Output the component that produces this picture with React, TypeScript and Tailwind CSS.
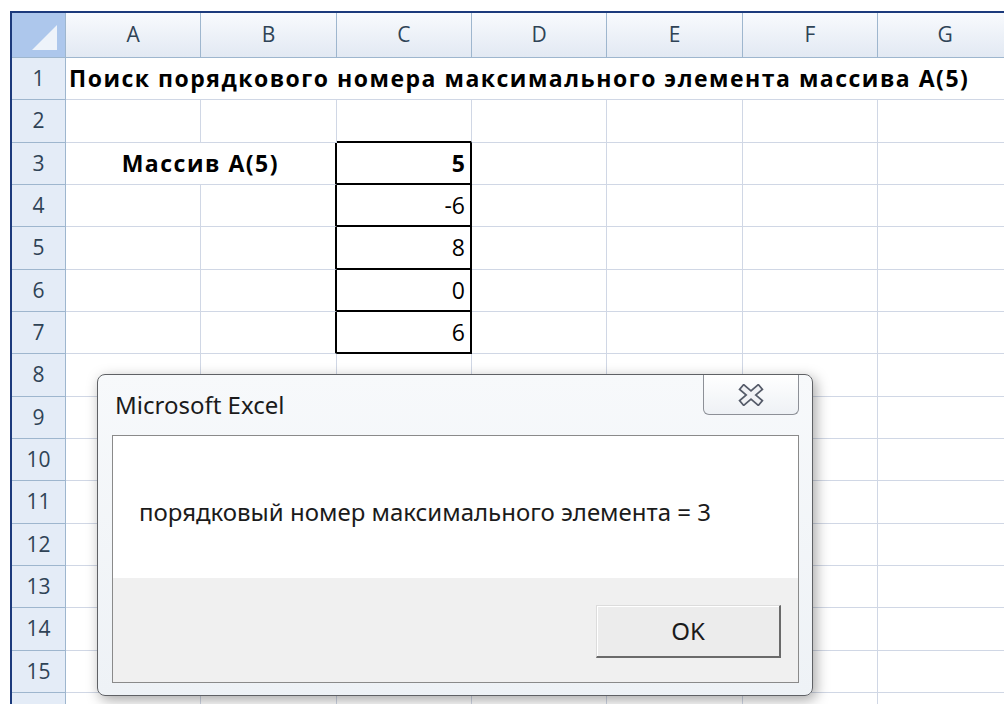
import React from "react";

const COLS = ["A", "B", "C", "D", "E", "F", "G"];
const VALUES: Record<number, string> = { 3: "5", 4: "-6", 5: "8", 6: "0", 7: "6" };
const ROWS = Array.from({ length: 16 }, (_, i) => i + 1);

const grid = "border-r border-b border-[#d0d7e5]";
const cellFont = { fontFamily: "'Open Sans', 'Noto Sans', sans-serif" };

function RowHeader({ n }: { n: number }) {
  return (
    <div className="flex items-center justify-center border-r border-b border-[#9eb6ce] bg-[#e4ecf7] text-[21px] text-[#2f4356]">
      {n < 16 ? n : ""}
    </div>
  );
}

function SheetRow({ n }: { n: number }) {
  if (n === 1) {
    return (
      <>
        <RowHeader n={n} />
        <div className={`col-span-7 flex items-center whitespace-nowrap pl-[3px] font-bold text-[23px] tracking-[1.5px] text-black ${grid}`}>
          Поиск порядкового номера максимального элемента массива А(5)
        </div>
      </>
    );
  }

  const inBox = n >= 3 && n <= 7;

  return (
    <>
      <RowHeader n={n} />
      {n === 3 ? (
        <div className="col-span-2 flex items-center justify-center border-b border-[#d0d7e5] border-r-2 border-r-black font-bold text-[23px] tracking-[1.5px] text-black">
          Массив А(5)
        </div>
      ) : (
        <>
          <div className={grid} />
          <div className={inBox ? "border-b border-[#d0d7e5] border-r-2 border-r-black" : grid} />
        </>
      )}
      {inBox ? (
        <div
          className={`flex items-center justify-end border-r-2 border-b-2 border-black pr-[5px] text-[23px] text-black ${
            n === 3 ? "font-bold" : ""
          }`}
        >
          {VALUES[n]}
        </div>
      ) : (
        <div className={n === 2 ? "border-r border-[#d0d7e5] border-b-2 border-b-black" : grid} />
      )}
      {COLS.slice(3).map((c) => (
        <div key={c} className={grid} />
      ))}
    </>
  );
}

function CloseGlyph() {
  return (
    <svg width="26" height="22" viewBox="0 0 26 22">
      <path d="M6 5 L20 17 M20 5 L6 17" stroke="#555b69" strokeWidth="8" strokeLinecap="square" />
      <path d="M6 5 L20 17 M20 5 L6 17" stroke="#f1f2f5" strokeWidth="4.5" strokeLinecap="square" />
    </svg>
  );
}

function MessageBox() {
  return (
    <div
      className="absolute left-[97px] top-[374px] flex h-[322px] w-[716px] flex-col rounded-[8px] border border-[#5f6165] bg-gradient-to-b from-[#f7f9fb] to-[#eef2f6] shadow-[3px_4px_14px_rgba(0,0,0,0.35)]"
      style={{ fontFamily: "'Noto Sans', 'Open Sans', sans-serif" }}
    >
      {/* title bar */}
      <div className="flex h-[60px] items-start justify-between">
        <span className="pl-[17px] pt-[16px] text-[24px] leading-[28px] text-[#1b1b1b]">Microsoft Excel</span>
        <button className="mr-[13px] flex h-[40px] w-[96px] items-center justify-center rounded-b-[6px] border border-t-0 border-[#8d9097] bg-gradient-to-b from-white to-[#eef1f5]">
          <CloseGlyph />
        </button>
      </div>

      {/* client area */}
      <div className="mx-[13px] ml-[14px] flex h-[248px] flex-col border border-[#8a8a8a]">
        <div className="h-[142px] bg-white pl-[26px] pt-[62px] text-[24px] leading-[28px] text-[#1b1b1b]">
          порядковый номер максимального элемента = 3
        </div>
        <div className="flex flex-1 items-start justify-end bg-[#f0f0f0] pr-[17px] pt-[27px]">
          <button className="h-[53px] w-[185px] border-t border-l border-[#dcdcdc] border-r-2 border-b-2 border-r-[#6a6a6a] border-b-[#6a6a6a] bg-[#ececec] text-[24px] text-[#1b1b1b] shadow-[inset_1px_1px_0_#ffffff]">
            OK
          </button>
        </div>
      </div>
    </div>
  );
}

export default function App() {
  return (
    <div className="relative h-[704px] w-[1004px] overflow-hidden bg-white pl-[10px] pt-[11px]">
      <div className="h-full overflow-hidden border-t-2 border-l-2 border-[#1c3a7c]" style={cellFont}>
        <div className="grid grid-cols-[54px_repeat(7,135.33px)] grid-rows-[45px] auto-rows-[42.33px]">
          {/* corner */}
          <div className="relative border-r border-b border-[#9eb6ce] bg-[#adc7ec]">
            <svg className="absolute inset-0" width="54" height="45" viewBox="0 0 54 45">
              <path d="M45 12 L45 37 L20 37 Z" fill="#eef3fa" />
            </svg>
          </div>
          {COLS.map((c) => (
            <div
              key={c}
              className="flex items-center justify-center border-r border-b border-[#9eb6ce] bg-gradient-to-b from-[#f8fafd] to-[#e2e9f3] text-[21px] text-[#2f4356]"
            >
              {c}
            </div>
          ))}
          {ROWS.map((n) => (
            <SheetRow key={n} n={n} />
          ))}
        </div>
      </div>
      <MessageBox />
    </div>
  );
}
